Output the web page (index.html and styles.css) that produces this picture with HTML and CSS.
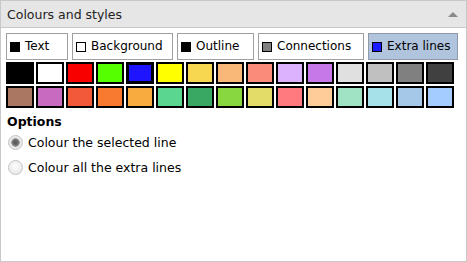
FILE: index.html
```html
<!DOCTYPE html>
<html lang="en">
	<head>
		<meta charset="UTF-8" />
		<title>Colours and styles</title>
		<link rel="stylesheet" href="styles.css">
	</head>
	<body>
		<section class="panel">
			<header class="panel-head">
				<span class="panel-title">Colours and styles</span>
				<span class="caret"></span>
			</header>
			<div class="panel-body">
				<div class="tabs">
					<button type="button" class="tab"><i class="chip" style="background:#000"></i>Text</button>
					<button type="button" class="tab"><i class="chip" style="background:#fff"></i>Background</button>
					<button type="button" class="tab"><i class="chip" style="background:#000"></i>Outline</button>
					<button type="button" class="tab"><i class="chip" style="background:#808080"></i>Connections</button>
					<button type="button" class="tab active"><i class="chip" style="background:#1a1aff"></i>Extra lines</button>
				</div>
				<div class="palette">
					<span class="swatch" style="background:#000000"></span>
					<span class="swatch" style="background:#ffffff"></span>
					<span class="swatch" style="background:#f80000"></span>
					<span class="swatch" style="background:#55ff00"></span>
					<span class="swatch selected" style="background:#1e14ff"></span>
					<span class="swatch" style="background:#ffff00"></span>
					<span class="swatch" style="background:#f8d750"></span>
					<span class="swatch" style="background:#fab878"></span>
					<span class="swatch" style="background:#fa8a7a"></span>
					<span class="swatch" style="background:#dcb2ff"></span>
					<span class="swatch" style="background:#c678e8"></span>
					<span class="swatch" style="background:#e0e0e0"></span>
					<span class="swatch" style="background:#c0c0c0"></span>
					<span class="swatch" style="background:#808080"></span>
					<span class="swatch" style="background:#404040"></span>
					<span class="swatch" style="background:#aa7862"></span>
					<span class="swatch" style="background:#c86ac0"></span>
					<span class="swatch" style="background:#f2583a"></span>
					<span class="swatch" style="background:#f87a30"></span>
					<span class="swatch" style="background:#f8ac40"></span>
					<span class="swatch" style="background:#5ad690"></span>
					<span class="swatch" style="background:#38a862"></span>
					<span class="swatch" style="background:#88d640"></span>
					<span class="swatch" style="background:#e4dc68"></span>
					<span class="swatch" style="background:#fe7a7e"></span>
					<span class="swatch" style="background:#fecc98"></span>
					<span class="swatch" style="background:#a0e2c4"></span>
					<span class="swatch" style="background:#a6e0e8"></span>
					<span class="swatch" style="background:#a6c8e8"></span>
					<span class="swatch" style="background:#a4ccff"></span>
				</div>
				<h3 class="options-title">Options</h3>
				<label class="option"><input type="radio" name="scope" checked />Colour the selected line</label>
				<label class="option"><input type="radio" name="scope" />Colour all the extra lines</label>
			</div>
		</section>
	</body>
</html>
```

FILE: styles.css
```css
body {
	margin: 0;
	font-family: 'DejaVu Sans', Verdana, sans-serif;
	font-size: 12px;
	color: #000;
}
.panel {
	box-sizing: border-box;
	width: 467px;
	height: 262px;
	border: 1px solid #c8c8c8;
	background: #fff;
}
.panel-head {
	display: flex;
	align-items: center;
	justify-content: space-between;
	height: 26px;
	padding: 0 8px 0 6px;
	background: #e6e6e6;
	border-bottom: 1px solid #c8c8c8;
	color: #222;
	font-size: 12.5px;
}
.caret {
	width: 0;
	height: 0;
	border-left: 5px solid transparent;
	border-right: 5px solid transparent;
	border-bottom: 5px solid #8a8a8a;
}
.panel-body {
	padding: 5px 5px 0 5px;
}
.tabs {
	display: grid;
	grid-template-columns: 62px 101px 77px 106px 90px;
	gap: 4px;
}
.tab {
	display: flex;
	align-items: center;
	box-sizing: border-box;
	height: 27px;
	padding: 0 0 1px 3px;
	border: 1px solid #a0a0a0;
	background: #fff;
	font: inherit;
	color: #000;
	text-align: left;
}
.tab.active {
	background: #b0c4de;
	border-color: #8f9aa8;
}
.chip {
	box-sizing: border-box;
	width: 10px;
	height: 10px;
	margin: 1px 5px 0 0;
	border: 1px solid #000;
}
.palette {
	display: grid;
	grid-template-columns: repeat(15, 28px);
	grid-auto-rows: 22px;
	gap: 2px;
	margin-top: 2px;
}
.swatch {
	box-sizing: border-box;
	border: 2px solid #000;
}
.swatch.selected {
	border-width: 3px;
}
.options-title {
	margin: 6px 0 0 1px;
	font-size: 12.5px;
	font-weight: bold;
	line-height: 16px;
}
.option {
	display: flex;
	align-items: center;
	height: 25px;
	margin-left: 1px;
	font-size: 12.5px;
}
.option input {
	appearance: none;
	box-sizing: border-box;
	width: 15px;
	height: 15px;
	margin: 0 5px 0 1px;
	border: 1px solid #c4c4c4;
	border-radius: 50%;
	background: radial-gradient(circle at 50% 40%, #fdfdfd, #e4e4e4);
}
.option input:checked {
	background: radial-gradient(circle, #555 0, #6a6a6a 2.5px, #9a9a9a 4px, #e6e6e6 4.5px, #f0f0f0 100%);
}
```
